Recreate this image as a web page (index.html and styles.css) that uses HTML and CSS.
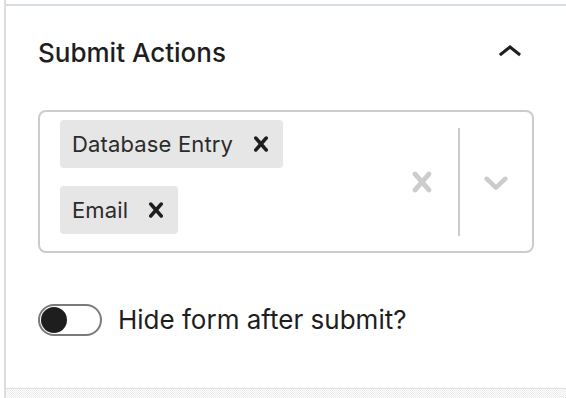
FILE: index.html
```html
<!DOCTYPE html>
<html lang="en">
<head>
<meta charset="utf-8">
<title>Submit Actions</title>
<link rel="stylesheet" href="styles.css">
</head>
<body>
<div class="sidebar">
  <div class="panel">
    <div class="panel-header">
      <h2 class="panel-title">Submit Actions</h2>
      <button class="panel-toggle" aria-label="Collapse">
        <svg viewBox="0 0 24 24" width="48" height="48"><path d="M6.5 12.4L12 8l5.5 4.4-.9 1.2L12 10l-4.6 3.6-1-1.2z" fill="#1e1e1e"/></svg>
      </button>
    </div>
    <div class="panel-body">
      <div class="select">
        <div class="select-values">
          <div class="chip">
            <span class="chip-label">Database Entry</span>
            <span class="chip-remove"><svg viewBox="0 0 20 20" width="30" height="30"><path d="M14.348 14.849c-0.469 0.469-1.229 0.469-1.697 0l-2.651-3.030-2.651 3.029c-0.469 0.469-1.229 0.469-1.697 0-0.469-0.469-0.469-1.229 0-1.697l2.758-3.150-2.759-3.152c-0.469-0.469-0.469-1.228 0-1.697s1.228-0.469 1.697 0l2.652 3.031 2.651-3.031c0.469-0.469 1.228-0.469 1.697 0s0.469 1.229 0 1.697l-2.758 3.152 2.758 3.150c0.469 0.469 0.469 1.229 0 1.698z"/></svg></span>
          </div>
          <div class="chip">
            <span class="chip-label">Email</span>
            <span class="chip-remove"><svg viewBox="0 0 20 20" width="30" height="30"><path d="M14.348 14.849c-0.469 0.469-1.229 0.469-1.697 0l-2.651-3.030-2.651 3.029c-0.469 0.469-1.229 0.469-1.697 0-0.469-0.469-0.469-1.229 0-1.697l2.758-3.150-2.759-3.152c-0.469-0.469-0.469-1.228 0-1.697s1.228-0.469 1.697 0l2.652 3.031 2.651-3.031c0.469-0.469 1.228-0.469 1.697 0s0.469 1.229 0 1.697l-2.758 3.152 2.758 3.150c0.469 0.469 0.469 1.229 0 1.698z"/></svg></span>
          </div>
        </div>
        <div class="select-indicators">
          <span class="indicator"><svg viewBox="0 0 20 20" width="40" height="40"><path d="M14.348 14.849c-0.469 0.469-1.229 0.469-1.697 0l-2.651-3.030-2.651 3.029c-0.469 0.469-1.229 0.469-1.697 0-0.469-0.469-0.469-1.229 0-1.697l2.758-3.150-2.759-3.152c-0.469-0.469-0.469-1.228 0-1.697s1.228-0.469 1.697 0l2.652 3.031 2.651-3.031c0.469-0.469 1.228-0.469 1.697 0s0.469 1.229 0 1.697l-2.758 3.152 2.758 3.150c0.469 0.469 0.469 1.229 0 1.698z"/></svg></span>
          <span class="separator"></span>
          <span class="indicator"><svg viewBox="0 0 20 20" width="40" height="40"><path d="M4.516 7.548c0.436-0.446 1.043-0.481 1.576 0l3.908 3.747 3.908-3.747c0.533-0.481 1.141-0.446 1.574 0 0.436 0.445 0.408 1.197 0 1.615-0.406 0.418-4.695 4.502-4.695 4.502-0.217 0.223-0.502 0.335-0.787 0.335s-0.57-0.112-0.789-0.335c0 0-4.287-4.084-4.695-4.502s-0.436-1.170 0-1.615z"/></svg></span>
        </div>
      </div>
      <label class="toggle-row">
        <span class="toggle"><span class="toggle-thumb"></span></span>
        <span class="toggle-label">Hide form after submit?</span>
      </label>
    </div>
  </div>
  <div class="next-panel"></div>
</div>
</body>
</html>
```
FILE: styles.css
```css
html, body {
  margin: 0;
  padding: 0;
  background: #fff;
}
body {
  font-family: Inter, "Noto Sans", "Liberation Sans", sans-serif;
  color: #1e1e1e;
  width: 566px;
  height: 398px;
  overflow: hidden;
}
.sidebar {
  margin-left: 4px;
  border-left: 2px solid #dddddd;
  height: 398px;
  padding-top: 4px;
  box-sizing: border-box;
  display: flex;
  flex-direction: column;
}
.panel {
  border-top: 2px solid #d5dbe2;
  border-bottom: 1px solid #e0e0e0;
  height: 385px;
  box-sizing: border-box;
}
.panel-header {
  height: 94px;
  display: flex;
  align-items: center;
  justify-content: space-between;
  padding: 0 32px;
}
.panel-title {
  margin: 0;
  font-size: 26px;
  font-weight: 500;
  line-height: 32px;
}
.panel-toggle {
  width: 48px;
  height: 48px;
  padding: 0;
  border: 0;
  background: none;
  display: flex;
  align-items: center;
  justify-content: center;
}
.panel-body {
  padding: 10px 32px 0;
}
.select {
  display: flex;
  border: 2px solid #cccccc;
  border-radius: 8px;
  height: 143px;
  box-sizing: border-box;
}
.select-values {
  flex: 1;
  display: flex;
  flex-direction: column;
  align-items: flex-start;
  gap: 18px;
  padding: 8px 20px 17px;
}
.chip {
  display: flex;
  align-items: center;
  height: 48px;
  background: #e6e6e6;
  border-radius: 4px;
}
.chip-label {
  font-size: 22px;
  letter-spacing: 0.15px;
  color: #2b2b2b;
  padding-left: 12px;
  padding-right: 5px;
}
.chip-remove {
  width: 45px;
  height: 48px;
  display: flex;
  align-items: center;
  justify-content: center;
  fill: #1e1e1e;
}
.select-indicators {
  display: flex;
  align-items: center;
}
.indicator {
  display: flex;
  padding: 0 16px;
  fill: #cccccc;
}
.separator {
  align-self: stretch;
  width: 2px;
  margin: 16px 0 15px;
  background: #cccccc;
}
.toggle-row {
  display: flex;
  align-items: center;
  gap: 16px;
  margin-top: 51px;
}
.toggle {
  width: 64px;
  height: 32px;
  box-sizing: border-box;
  border: 2px solid #7a7a7a;
  border-radius: 16px;
  display: flex;
  align-items: center;
  padding-left: 1px;
}
.toggle-thumb {
  width: 26px;
  height: 26px;
  border-radius: 50%;
  background: #1e1e1e;
}
.toggle-label {
  font-size: 26px;
  line-height: 32px;
}
.next-panel {
  flex: 1;
  background-color: #ffffff;
  background-image: repeating-conic-gradient(#ececec 0 25%, #ffffff 0 50%);
  background-size: 2px 2px;
}
```
